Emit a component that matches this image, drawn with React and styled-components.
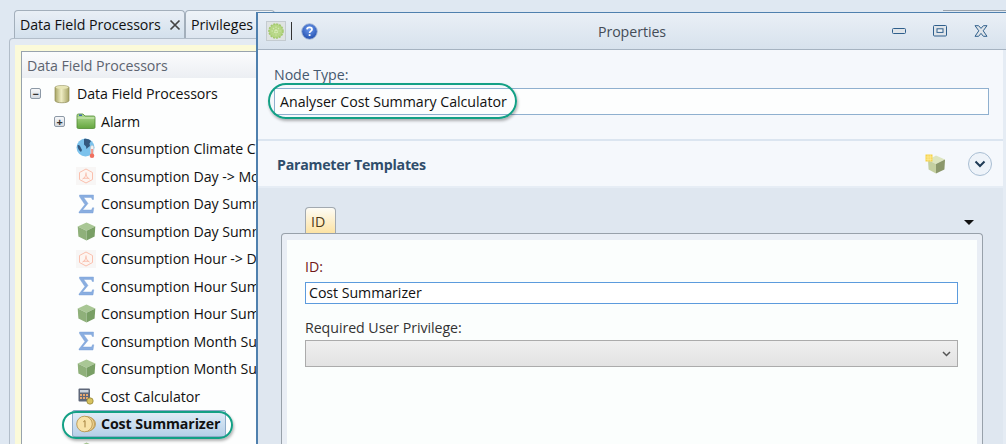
import React from "react";
import styled, { createGlobalStyle } from "styled-components";

const GlobalStyle = createGlobalStyle`
  html, body {
    margin: 0;
    height: 100%;
    overflow: hidden;
    background: #dfe8f2;
  }
  body {
    font-family: "Open Sans", "Liberation Sans", sans-serif;
    font-size: 14px;
    color: #111;
  }
`;

const Page = styled.div`
  position: relative;
  width: 1006px;
  height: 444px;
  overflow: hidden;
  background: #dfe8f2;
`;

/**
 * Left side, tree behind the dialog
 */
const TabStrip = styled.div`
  display: flex;
  padding: 10px 0 0 14px;
  height: 28px;
  box-sizing: content-box;
`;

const Tab = styled.div`
  display: flex;
  align-items: center;
  justify-content: space-between;
  box-sizing: border-box;
  width: ${props => props.$width}px;
  padding: 0 3px 0 5px;
  border: 1px solid #a3afbb;
  border-bottom: none;
  border-radius: 4px 4px 0 0;
  background: ${props =>
    props.$active
      ? "linear-gradient(#e9eff6, #d3e0ec)"
      : "linear-gradient(#eef3f8, #dde6f0)"};
  font-size: 14.2px;
  white-space: nowrap;
  letter-spacing: -0.05px;
`;

const Outer = styled.div`
  margin-left: 9px;
  height: 406px;
  box-sizing: border-box;
  padding: 6px 0 0 5px;
  border: 1px solid #b2bdc9;
  border-bottom: none;
  border-radius: 4px 0 0 0;
  background: #e4ebf3;
`;

const Yellow = styled.div`
  height: 100%;
  box-sizing: border-box;
  padding: 6px 0 0 6px;
  background: #fbfad9;
`;

const TreePanel = styled.div`
  height: 100%;
  box-sizing: border-box;
  border: 1px solid #98a3ad;
  border-bottom: none;
  background: #fdfefe;
  overflow: hidden;
`;

const TreeHeader = styled.div`
  display: flex;
  align-items: center;
  height: 26px;
  padding-left: 5px;
  background: linear-gradient(#fbfcfd, #eceff3);
  color: #5d6470;
  font-size: 14.2px;
  letter-spacing: -0.05px;
`;

const Tree = styled.div`
  display: grid;
  grid-auto-rows: 27.5px;
  padding-top: 2px;
`;

const Row = styled.div`
  display: flex;
  align-items: center;
  height: 27.5px;
  padding-left: ${props => props.$indent}px;
  white-space: nowrap;
  font-size: 14.2px;
  letter-spacing: -0.05px;
`;

const Expander = styled.span`
  display: flex;
  align-items: center;
  justify-content: center;
  box-sizing: border-box;
  width: 11px;
  height: 11px;
  margin-right: 10px;
  border: 1px solid #8d99a6;
  border-radius: 2px;
  background: linear-gradient(#f7f8fa, #d5dae0);
  color: #333;
  font-size: 11px;
  line-height: 1;
  font-weight: 700;
`;

const IconSlot = styled.span`
  display: flex;
  align-items: center;
  justify-content: center;
  width: 22px;
  height: 22px;
  margin-right: 4px;
  flex: none;
`;

const Selected = styled.span`
  display: flex;
  align-items: center;
  height: 27px;
  margin-left: -3px;
  padding: 0 2px;
  width: 154px;
  box-sizing: border-box;
  border: 1px solid #8fabc8;
  border-radius: 2px;
  background: linear-gradient(#e2edf8, #b7d0e8);
  font-weight: 700;
  letter-spacing: -0.1px;
`;

const BackEdge = styled.div`
  position: absolute;
  left: 943px;
  right: 0;
  top: 10px;
  height: 1px;
  background: #98a2ac;
`;

/**
 * Properties dialog, floating over the tree
 */
const Dialog = styled.div`
  position: absolute;
  left: 256px;
  top: 12px;
  right: 0;
  bottom: 0;
  display: flex;
  flex-direction: column;
  border-left: 2px solid #4f80ae;
  border-top: 1px solid #4f80ae;
  background: #f5f8fc;
  overflow: hidden;
`;

const TitleBar = styled.div`
  display: flex;
  align-items: center;
  flex: none;
  height: 37px;
  box-sizing: border-box;
  padding-left: 8px;
  border-bottom: 1px solid #a6b3c1;
  background: linear-gradient(#e9eff6, #d7e2ed);
`;

const GearButton = styled.span`
  display: flex;
  align-items: center;
  justify-content: center;
  box-sizing: border-box;
  width: 20px;
  height: 20px;
  border: 1px solid #c4cbd0;
  background: #dfe3e3;
`;

const Divider = styled.span`
  width: 1px;
  height: 18px;
  margin: 0 9px 0 5px;
  background: #333;
`;

const Title = styled.div`
  flex: 1;
  text-align: center;
  color: #444c57;
  font-size: 14.2px;
  letter-spacing: -0.05px;
  padding-left: 58px;
  padding-right: 4px;
`;

const WindowButtons = styled.div`
  display: flex;
  align-items: center;
  gap: 27px;
  padding: 0 18px 0 0;
`;

const DialogBody = styled.div`
  flex: 1;
  display: flex;
  flex-direction: column;
  min-height: 0;
  border-right: 3px solid #e5ecf4;
`;

const NodeSection = styled.div`
  flex: none;
  height: 91px;
  box-sizing: border-box;
  padding: 15px 14px 0 16px;
  border-bottom: 2px solid #dbe5f0;
`;

const FieldLabel = styled.div`
  height: 20px;
  line-height: 20px;
  margin-bottom: ${props => props.$gap}px;
  color: ${props => props.$color};
  font-size: 14.2px;
  letter-spacing: -0.05px;
`;

const NodeInput = styled.div`
  display: flex;
  align-items: center;
  height: 27px;
  box-sizing: border-box;
  padding-left: 5px;
  border: 1px solid #8fb0cf;
  background: #fdfefe;
  font-size: 14.2px;
  letter-spacing: -0.02px;
`;

const TemplatesHeader = styled.div`
  display: flex;
  align-items: center;
  flex: none;
  height: 47px;
  box-sizing: border-box;
  padding: 1px 11px 0 19px;
  border-bottom: 2px solid #e6edf5;
`;

const TemplatesTitle = styled.div`
  flex: 1;
  color: #2f4d6b;
  font-size: 14.2px;
  font-weight: 700;
  letter-spacing: -0.25px;
`;

const RoundButton = styled.span`
  display: flex;
  align-items: center;
  justify-content: center;
  box-sizing: border-box;
  width: 24px;
  height: 24px;
  margin-left: 22px;
  border: 1px solid #a9bed3;
  border-radius: 50%;
  background: #eef3f9;
`;

const TemplatesBody = styled.div`
  flex: 1;
  display: flex;
  flex-direction: column;
  padding: 19px 20px 0 23px;
  background: #dfe7f0;
`;

const InnerTabRow = styled.div`
  display: flex;
  justify-content: space-between;
  align-items: center;
  height: 26px;
  padding: 0 9px 0 24px;
`;

const InnerTab = styled.div`
  display: flex;
  align-items: center;
  box-sizing: border-box;
  width: 31px;
  height: 27px;
  margin-bottom: -1px;
  padding-left: 5px;
  border: 1px solid #a2a9b0;
  border-bottom: none;
  border-radius: 4px 4px 0 0;
  background: linear-gradient(#fdfcf6, #fde2a0);
  color: #4c3a18;
  font-size: 14.2px;
`;

const Caret = styled.span`
  width: 0;
  height: 0;
  margin-top: 4px;
  border-left: 5px solid transparent;
  border-right: 5px solid transparent;
  border-top: 5px solid #111;
`;

const TabPanel = styled.div`
  flex: 1;
  box-sizing: border-box;
  padding: 6px 5px 0 5px;
  border: 1px solid #98a1aa;
  border-bottom: none;
  border-radius: 4px 4px 0 0;
  background: #e9eef5;
`;

const TabContent = styled.div`
  height: 100%;
  box-sizing: border-box;
  padding: 17px 19px 0 18px;
  background: #fbfefd;
`;

const IdInput = styled.div`
  display: flex;
  align-items: center;
  height: 22px;
  box-sizing: border-box;
  padding: 0 0 2px 3px;
  margin-bottom: 14px;
  border: 1px solid #5c9bdd;
  background: #fff;
  font-size: 14.2px;
  letter-spacing: -0.05px;
`;

const SelectBox = styled.div`
  display: flex;
  align-items: center;
  justify-content: flex-end;
  height: 27px;
  box-sizing: border-box;
  padding-right: 6px;
  border: 1px solid #ababab;
  background: linear-gradient(#efefef, #e3e3e3);
`;

// teal ovals somebody drew on top of the screenshot
const Callout = styled.div`
  position: absolute;
  left: ${props => props.$left}px;
  top: ${props => props.$top}px;
  width: ${props => props.$width}px;
  height: ${props => props.$height}px;
  box-sizing: border-box;
  border: 2px solid #13a085;
  border-radius: ${props => props.$height / 2}px;
  box-shadow: 1px 2px 3px rgba(0, 0, 0, 0.3);
`;

/**
 * Icons
 */
const Cylinder = () => (
  <svg width="18" height="20" viewBox="0 0 18 20">
    <defs>
      <linearGradient id="cyl" x1="0" x2="1" y1="0" y2="0">
        <stop offset="0" stopColor="#a8a565" />
        <stop offset="0.45" stopColor="#efedc4" />
        <stop offset="1" stopColor="#a5a263" />
      </linearGradient>
    </defs>
    <path d="M2 3.5C2 1 16 1 16 3.5V16.5C16 19.5 2 19.5 2 16.5Z" fill="url(#cyl)" stroke="#8d8a55" strokeWidth="0.7" />
    <ellipse cx="9" cy="3.4" rx="6.4" ry="1.6" fill="#e7e5b6" />
  </svg>
);

const Folder = () => (
  <svg width="20" height="16" viewBox="0 0 20 16">
    <defs>
      <linearGradient id="fold" x1="0" x2="0" y1="0" y2="1">
        <stop offset="0" stopColor="#b3dc94" />
        <stop offset="1" stopColor="#64a63f" />
      </linearGradient>
    </defs>
    <path d="M1 2.5C1 1.5 1.5 1 2.5 1H7L9 3H17.5C18.5 3 19 3.5 19 4.5V14C19 15 18.5 15.5 17.5 15.5H2.5C1.5 15.5 1 15 1 14Z" fill="url(#fold)" stroke="#4f8a32" strokeWidth="0.8" />
    <rect x="3" y="1.5" width="3" height="1.5" fill="#3f6cae" />
    <path d="M1.5 5H18.5" stroke="#d7eec4" strokeWidth="1" />
  </svg>
);

const GlobeThermo = () => (
  <svg width="21" height="21" viewBox="0 0 21 21">
    <circle cx="9.5" cy="9.5" r="9" fill="#7cc2ec" />
    <path d="M8 1C10 0.5 13 1 15 3L13.5 5.5L14 8L12 9.5L10.5 11L10 8.5L8 6.5Z" fill="#34597f" />
    <path d="M1.5 7.5C2.5 6.5 4 7.5 4.5 9L6 12L5 14C3 12.5 1.5 10.5 1.5 7.5Z" fill="#34597f" />
    <rect x="14.6" y="7.5" width="3" height="9" rx="1.5" fill="#f4f4f4" stroke="#c9c9c9" strokeWidth="0.5" />
    <rect x="15.4" y="11" width="1.3" height="6" fill="#f0705f" />
    <circle cx="16" cy="17.8" r="2.3" fill="#f0705f" />
  </svg>
);

const HexTile = () => (
  <svg width="20" height="18" viewBox="0 0 20 18">
    <rect width="20" height="18" fill="#f8f6f5" />
    <path d="M10 2L16.5 5.5V12.5L10 16L3.5 12.5V5.5Z" fill="#fdf5f1" stroke="#fac0ae" strokeWidth="1" />
    <path d="M10 5.5V9.5M6.5 12L10 9.5L13.5 12" fill="none" stroke="#f7a48d" strokeWidth="0.8" />
    <path d="M8 11.5L10 7.5L12 11.5Z" fill="#fde3da" stroke="#f8bba8" strokeWidth="0.6" />
  </svg>
);

const Sigma = () => (
  <svg width="17" height="20" viewBox="0 0 17 20">
    <path d="M1.5 1H15.5V5.5H14.3L13.4 3.4H5.6L10 9.4L4.6 16H13.6L14.5 13.8H15.8L15 19H1V18L6.9 10.6L1.5 2.6Z" fill="#8aaee0" stroke="#7199d3" strokeWidth="0.4" />
  </svg>
);

const Cube = () => (
  <svg width="19" height="19" viewBox="0 0 19 19">
    <path d="M9.5 0.5L18.3 4.6L9.5 8.8L0.7 4.6Z" fill="#a9c795" />
    <path d="M0.7 4.6L9.5 8.8V18.5L1.4 14.4Z" fill="#8fb07a" />
    <path d="M18.3 4.6L9.5 8.8V18.5L17.6 14.4Z" fill="#799f65" />
  </svg>
);

const Calculator = () => (
  <svg width="16" height="17" viewBox="0 0 16 17">
    <rect x="0.5" y="0.5" width="11.5" height="13" rx="1" fill="#5e6779" />
    <rect x="2" y="2" width="8.5" height="2.5" fill="#cdd3dd" />
    <path d="M2 6H4V8H2ZM5 6H7V8H5ZM8 6H10V8H8ZM2 9H4V11H2ZM5 9H7V11H5ZM8 9H10V11H8Z" fill="#e8a66f" />
    <circle cx="12" cy="13" r="3.2" fill="#d7c25f" stroke="#8d7e2f" strokeWidth="0.7" />
  </svg>
);

const Coins = () => (
  <svg width="20" height="20" viewBox="0 0 20 20">
    <circle cx="13" cy="10" r="6.5" fill="#e6c582" stroke="#b18f48" strokeWidth="0.7" />
    <circle cx="11" cy="10" r="7.5" fill="#efd391" stroke="#b18f48" strokeWidth="0.7" />
    <circle cx="8.5" cy="10" r="7.8" fill="#f8e2a8" stroke="#b18f48" strokeWidth="0.8" />
    <path d="M7.3 7.8L9 6.6V13.4" fill="none" stroke="#a17f3d" strokeWidth="1" />
  </svg>
);

const GearIcon = () => (
  <svg width="16" height="16" viewBox="0 0 16 16">
    <circle cx="8" cy="8" r="7" fill="#b5d684" />
    <circle cx="8" cy="8" r="7" fill="none" stroke="#a2c86c" strokeDasharray="2 1" strokeWidth="1.5" />
    <path d="M3.5 8H12.5M8 3.5V12.5M5 5L11 11M11 5L5 11" stroke="#d6e9b4" strokeWidth="1.1" strokeDasharray="1.5 1.2" />
  </svg>
);

const HelpIcon = () => (
  <svg width="17" height="17" viewBox="0 0 17 17">
    <defs>
      <radialGradient id="help" cx="0.5" cy="0.35" r="0.7">
        <stop offset="0" stopColor="#6f9cf0" />
        <stop offset="1" stopColor="#1c48a8" />
      </radialGradient>
    </defs>
    <circle cx="8.5" cy="8.5" r="7.8" fill="url(#help)" stroke="#a9bbd8" strokeWidth="0.9" />
    <path d="M6 6.4C6.2 3.8 11 3.8 11 6.4C11 8.2 8.6 8.1 8.6 10" fill="none" stroke="#fff" strokeWidth="1.7" />
    <rect x="7.7" y="11.2" width="1.8" height="1.8" fill="#fff" />
  </svg>
);

const MinimizeIcon = () => (
  <svg width="14" height="6" viewBox="0 0 14 6">
    <rect x="0.5" y="0.5" width="13" height="5" rx="1" fill="#dfe4e9" stroke="#2f5f8c" />
  </svg>
);

const MaximizeIcon = () => (
  <svg width="14" height="12" viewBox="0 0 14 12">
    <rect x="0.5" y="0.5" width="13" height="10.5" rx="1" fill="#dfe4e9" stroke="#2f5f8c" />
    <rect x="4" y="3.8" width="6" height="3.6" fill="#f0f3f6" stroke="#2f5f8c" />
  </svg>
);

const CloseIcon = () => (
  <svg width="14" height="12" viewBox="0 0 14 12">
    <path d="M1 0.7H4.6L7 3.4L9.4 0.7H13L9.2 5.8L13 11.3H9.4L7 8.4L4.6 11.3H1L4.8 5.8Z" fill="#dfe4e9" stroke="#2f5f8c" />
  </svg>
);

const TabClose = () => (
  <svg width="12" height="12" viewBox="0 0 12 12">
    <path d="M1.5 1.5L10.5 10.5M10.5 1.5L1.5 10.5" stroke="#444" strokeWidth="1.7" />
  </svg>
);

const NewTemplateIcon = () => (
  <svg width="21" height="20" viewBox="0 0 21 20">
    <path d="M11 1.5L20 5.5L11 10L3 6Z" fill="#dde5bf" />
    <path d="M3 6L11 10V19.5L3.6 15.5Z" fill="#c4cfa0" />
    <path d="M20 5.5L11 10V19.5L19.4 15.5Z" fill="#8b976b" />
    <rect x="0.5" y="0.5" width="7" height="7" fill="#f6d24a" />
    <path d="M0.5 3H7.5M0.5 5.2H7.5M3 0.5V7.5M5.2 0.5V7.5" stroke="#fff0a8" strokeWidth="0.7" />
  </svg>
);

const CollapseIcon = () => (
  <svg width="12" height="8" viewBox="0 0 12 8">
    <path d="M1.5 1.5L6 6L10.5 1.5" fill="none" stroke="#1f3a55" strokeWidth="2" />
  </svg>
);

const SelectChevron = () => (
  <svg width="9" height="6" viewBox="0 0 9 6">
    <path d="M1 1L4.5 4.5L8 1" fill="none" stroke="#555" strokeWidth="1.5" />
  </svg>
);

const treeItems = [
  { icon: <GlobeThermo />, label: "Consumption Climate Calculator" },
  { icon: <HexTile />, label: "Consumption Day -> Month" },
  { icon: <Sigma />, label: "Consumption Day Summarizer" },
  { icon: <Cube />, label: "Consumption Day Summary" },
  { icon: <HexTile />, label: "Consumption Hour -> Day" },
  { icon: <Sigma />, label: "Consumption Hour Summarizer" },
  { icon: <Cube />, label: "Consumption Hour Summary" },
  { icon: <Sigma />, label: "Consumption Month Summarizer" },
  { icon: <Cube />, label: "Consumption Month Summary" },
  { icon: <Calculator />, label: "Cost Calculator" }
];

const App = () => (
  <Page>
    <GlobalStyle />
    <TabStrip>
      <Tab $active $width={171}>
        Data Field Processors
        <TabClose />
      </Tab>
      <Tab $width={90}>Privileges</Tab>
    </TabStrip>
    <Outer>
      <Yellow>
        <TreePanel>
          <TreeHeader>Data Field Processors</TreeHeader>
          <Tree>
            <Row $indent={8}>
              <Expander>−</Expander>
              <IconSlot><Cylinder /></IconSlot>
              Data Field Processors
            </Row>
            <Row $indent={32}>
              <Expander>+</Expander>
              <IconSlot><Folder /></IconSlot>
              Alarm
            </Row>
            {treeItems.map(item => (
              <Row key={item.label} $indent={53}>
                <IconSlot>{item.icon}</IconSlot>
                {item.label}
              </Row>
            ))}
            <Row $indent={53}>
              <Selected>
                <IconSlot><Coins /></IconSlot>
                Cost Summarizer
              </Selected>
            </Row>
            <Row $indent={53}>
              <IconSlot><Cube /></IconSlot>
            </Row>
          </Tree>
        </TreePanel>
      </Yellow>
    </Outer>
    <BackEdge />

    <Dialog>
      <TitleBar>
        <GearButton><GearIcon /></GearButton>
        <Divider />
        <HelpIcon />
        <Title>Properties</Title>
        <WindowButtons>
          <MinimizeIcon />
          <MaximizeIcon />
          <CloseIcon />
        </WindowButtons>
      </TitleBar>
      <DialogBody>
        <NodeSection>
          <FieldLabel $gap={3} $color="#45596f">Node Type:</FieldLabel>
          <NodeInput>Analyser Cost Summary Calculator</NodeInput>
        </NodeSection>
        <TemplatesHeader>
          <TemplatesTitle>Parameter Templates</TemplatesTitle>
          <NewTemplateIcon />
          <RoundButton><CollapseIcon /></RoundButton>
        </TemplatesHeader>
        <TemplatesBody>
          <InnerTabRow>
            <InnerTab>ID</InnerTab>
            <Caret />
          </InnerTabRow>
          <TabPanel>
            <TabContent>
              <FieldLabel $gap={5} $color="#701818">ID:</FieldLabel>
              <IdInput>Cost Summarizer</IdInput>
              <FieldLabel $gap={2} $color="#333">Required User Privilege:</FieldLabel>
              <SelectBox><SelectChevron /></SelectBox>
            </TabContent>
          </TabPanel>
        </TemplatesBody>
      </DialogBody>
    </Dialog>

    <Callout $left={268} $top={83} $width={249} $height={36} />
    <Callout $left={62} $top={411} $width={171} $height={28} />
  </Page>
);

export default App;
